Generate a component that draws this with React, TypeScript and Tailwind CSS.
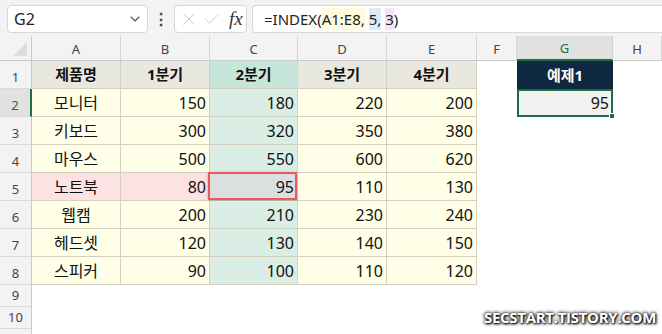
import React from 'react';
import { ChevronDown, X, Check } from 'lucide-react';

const rows: [string, number, number, number, number][] = [
  ['모니터', 150, 180, 220, 200],
  ['키보드', 300, 320, 350, 380],
  ['마우스', 500, 550, 600, 620],
  ['노트북', 80, 95, 110, 130],
  ['웹캠', 200, 210, 230, 240],
  ['헤드셋', 120, 130, 140, 150],
  ['스피커', 90, 100, 110, 120],
];

const letters = ['A', 'B', 'C', 'D', 'E', 'F', 'G', 'H'];
const quarters = ['1분기', '2분기', '3분기', '4분기'];

const font = { fontFamily: '"Noto Sans", "Noto Sans CJK KR", sans-serif' };

const RowHead: React.FC<{ n?: number; active?: boolean; short?: boolean }> = ({ n, active, short }) => (
  <div
    className={`flex justify-center text-[13px] border-b border-[#dadada] ${short ? 'items-center' : 'items-end pb-[1px]'} ${
      active ? 'bg-[#e1e1e1] text-[#1e6e42] border-r-2 border-r-[#1e6e42]' : 'bg-[#f3f3f3] text-[#444] border-r border-r-[#c9c9c9]'
    }`}
  >
    {n}
  </div>
);

const FormulaBar = () => (
  <div className="h-[36px] bg-[#f3f3f3] flex items-start pt-[5px] pl-[7px] gap-[5px]">
    <div className="w-[141px] h-[28px] bg-white border border-[#d6d6d6] rounded-[4px] flex items-center justify-between pl-[6px] pr-[4px] text-[16px] text-[#222]">
      <span>G2</span>
      <ChevronDown className="w-4 h-4 text-[#555]" strokeWidth={1.6} />
    </div>
    <div className="w-[16px] h-[28px] flex items-center justify-center text-[#444] text-[16px] font-bold">⋮</div>
    <div className="w-[73px] h-[28px] bg-white border border-[#d6d6d6] rounded-[4px] flex items-center pl-[4px] gap-[3px]">
      <X className="w-[20px] h-[20px] text-[#c4c4c4]" strokeWidth={1.1} />
      <Check className="w-[20px] h-[20px] text-[#c4c4c4]" strokeWidth={1.1} />
      <span className="ml-[4px] text-[19px] italic text-[#333]" style={{ fontFamily: '"Liberation Serif", serif' }}>
        fx
      </span>
    </div>
    <div className="flex-1 h-[28px] bg-white border border-[#d6d6d6] border-r-0 rounded-l-[4px] flex items-center pl-[11px] text-[15px] text-[#222]">
      <span>=INDEX(</span>
      <span className="bg-[#fffbdc]">A1:E8,</span>
      <span>&nbsp;</span>
      <span className="bg-[#dcebfa]">5,</span>
      <span>&nbsp;</span>
      <span className="bg-[#f9e0f6]">3</span>
      <span>)</span>
    </div>
  </div>
);

export default function App() {
  const tb = 'border-r border-b border-[#d5d1bf]';
  return (
    <div className="w-[662px] h-[334px] overflow-hidden bg-white relative" style={font}>
      <FormulaBar />
      <div className="grid grid-cols-[32px_89px_89px_88px_89px_90px_40px_96px_49px] grid-rows-[25px_repeat(8,28px)_22px_22px_22px]">
        {/* column headers */}
        <div className="bg-[#f3f3f3] border-r border-b border-[#c9c9c9] relative">
          <div className="absolute right-[4px] bottom-[4px] w-0 h-0 border-l-[14px] border-l-transparent border-b-[14px] border-b-[#dcdcdc]" />
        </div>
        {letters.map((l) =>
          l === 'G' ? (
            <div key={l} className="bg-[#e1e1e1] text-[#1e6e42] text-[13px] flex items-center justify-center pt-[3px] border-b-2 border-[#1e6e42] border-r border-r-[#d0d0d0]">
              {l}
            </div>
          ) : (
            <div key={l} className="bg-[#f3f3f3] text-[#444] text-[13px] flex items-center justify-center pt-[3px] border-r border-b border-[#d4d4d4] border-b-[#c9c9c9]">
              {l}
            </div>
          )
        )}

        {/* row 1 */}
        <RowHead n={1} />
        <div className={`${tb} bg-[#e9e8e0] flex items-center justify-center font-bold text-[15px] text-[#111]`}>제품명</div>
        {quarters.map((q, i) => (
          <div
            key={q}
            className={`${tb} ${i === 1 ? 'bg-[#c6e6dc]' : 'bg-[#e9e8e0]'} flex items-center justify-center font-bold text-[15px] text-[#111]`}
          >
            {q}
          </div>
        ))}
        <div />
        <div className="bg-[#0e2841] text-white font-bold text-[15px] flex items-center justify-center">예제1</div>
        <div />

        {/* rows 2-8 */}
        {rows.map((r, ri) => {
          const n = ri + 2;
          const hot = n === 5;
          return (
            <React.Fragment key={n}>
              <RowHead n={n} active={n === 2} />
              <div className={`${tb} ${hot ? 'bg-[#fde2e4]' : 'bg-[#fffee6]'} flex items-center justify-center text-[16px] text-[#111]`}>
                {r[0]}
              </div>
              {r.slice(1).map((v, ci) => {
                let bg = 'bg-[#fffee6]';
                if (ci === 1) bg = 'bg-[#daeee5]';
                if (hot && ci === 0) bg = 'bg-[#fde2e4]';
                if (hot && ci === 1) bg = 'bg-[#dcdfe0]';
                return (
                  <div key={ci} className={`${tb} ${bg} relative flex items-center justify-end pr-[3px] text-[16px] text-[#111]`}>
                    {v}
                    {hot && ci === 1 && (
                      <div className="absolute -left-[2px] -top-px right-0 bottom-0 border-2 border-[#ea5a5c] shadow-[0_1px_3px_rgba(0,0,0,0.25)]" />
                    )}
                  </div>
                );
              })}
              <div />
              {n === 2 ? (
                <div className="relative bg-[#f2f2f2] border-2 border-[#1e6e42] flex items-center justify-end pr-[2px] text-[16px] text-[#111]">
                  95
                  <div className="absolute -right-[4px] -bottom-[4px] w-[6px] h-[6px] bg-[#1e6e42] border border-white" />
                </div>
              ) : (
                <div />
              )}
              <div />
            </React.Fragment>
          );
        })}

        {/* rows 9-11 */}
        {[9, 10, 11].map((n) => (
          <React.Fragment key={n}>
            <RowHead n={n < 11 ? n : undefined} short />
            {letters.map((l) => (
              <div key={l} />
            ))}
          </React.Fragment>
        ))}
      </div>

      <div
        className="absolute left-[484px] top-[306px] text-white font-bold text-[15px] tracking-[-0.3px] [text-shadow:0_0_3px_#000,0_0_4px_#333,1px_1px_2px_#000]"
        style={{ fontFamily: '"Open Sans", sans-serif' }}
      >
        SECSTART.TISTORY.COM
      </div>
    </div>
  );
}
